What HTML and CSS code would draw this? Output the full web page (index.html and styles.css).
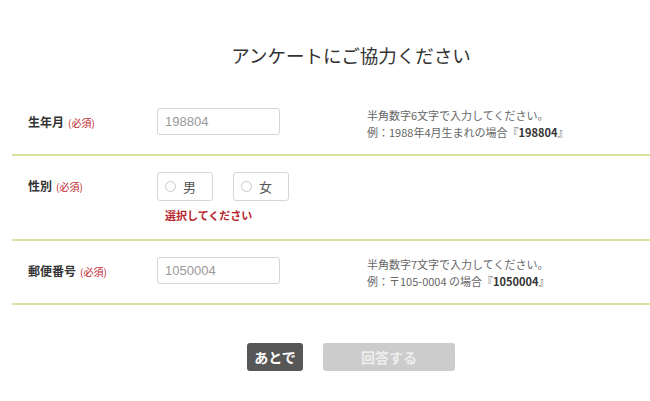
FILE: index.html
```html
<!DOCTYPE html>
<html lang="ja">
<head>
<meta charset="UTF-8">
<title>アンケート</title>
<link rel="stylesheet" href="styles.css">
</head>
<body>
<div class="survey">
<h1 class="survey-title">アンケートにご協力ください</h1>

<div class="row">
<div class="row-label">生年月<span class="required">(必須)</span></div>
<div class="row-field">
<input class="text-input" type="text" placeholder="198804">
</div>
<div class="row-hint">
<p>半角数字6文字で入力してください。</p>
<p>例：1988年4月生まれの場合『<b>198804</b>』</p>
</div>
</div>

<div class="row">
<div class="row-label">性別<span class="required">(必須)</span></div>
<div class="row-field">
<div class="radios">
<label class="radio"><span class="radio-dot"></span>男</label>
<label class="radio"><span class="radio-dot"></span>女</label>
</div>
<div class="error">選択してください</div>
</div>
</div>

<div class="row">
<div class="row-label">郵便番号<span class="required">(必須)</span></div>
<div class="row-field">
<input class="text-input" type="text" placeholder="1050004">
</div>
<div class="row-hint">
<p>半角数字7文字で入力してください。</p>
<p>例：〒105-0004 の場合『<b>1050004</b>』</p>
</div>
</div>

<div class="actions">
<button class="btn btn-later">あとで</button>
<button class="btn btn-submit" disabled>回答する</button>
</div>
</div>
</body>
</html>
```

FILE: styles.css
```css
body {
    margin: 0;
    padding: 0;
    background: #fff;
    color: #333;
    font-family: "Noto Sans CJK JP", "Noto Sans", sans-serif;
    overflow: hidden;
}
.survey {
    width: 678px;
    margin-left: 12px;
}
.survey-title {
    margin: 40px 0 22px;
    font-size: 18.5px;
    line-height: 30px;
    font-weight: normal;
    text-align: center;
    color: #333;
}
.row {
    display: flex;
    align-items: flex-start;
    padding: 16px 0 13px;
    border-bottom: 2px solid #d8e3a0;
}
.row-label {
    width: 129px;
    padding-left: 16px;
    font-size: 12px;
    line-height: 28px;
    font-weight: bold;
    color: #333;
}
.required {
    margin-left: 4px;
    font-size: 10px;
    font-weight: normal;
    color: #c0262d;
}
.row-field {
    width: 210px;
}
.text-input {
    display: block;
    box-sizing: border-box;
    width: 123px;
    height: 27px;
    padding: 0 7px;
    border: 1px solid #d6d6d6;
    border-radius: 3px;
    font-family: "Liberation Sans", Arial, sans-serif;
    font-size: 13px;
    color: #333;
}
.text-input::placeholder {
    color: #999;
}
.row-hint {
    margin-top: -1px;
    font-size: 11px;
    line-height: 17px;
    color: #666;
}
.row-hint p {
    margin: 0;
}
.row-hint b {
    color: #333;
}
.radios {
    display: flex;
    gap: 20px;
}
.radio {
    box-sizing: border-box;
    display: flex;
    align-items: center;
    width: 56px;
    height: 29px;
    padding-left: 7px;
    border: 1px solid #d6d6d6;
    border-radius: 3px;
    font-size: 13px;
    color: #555;
}
.radio-dot {
    box-sizing: border-box;
    width: 11px;
    height: 11px;
    margin-right: 7px;
    border: 1px solid #c8c8c8;
    border-radius: 50%;
}
.error {
    margin: 6px 0 0 8px;
    padding-bottom: 3px;
    font-size: 11px;
    line-height: 16px;
    font-weight: bold;
    color: #b8272e;
}
.actions {
    display: flex;
    justify-content: center;
    gap: 20px;
    margin-top: 38px;
}
.btn {
    height: 28px;
    border: none;
    border-radius: 3px;
    font-family: "Noto Sans CJK JP", sans-serif;
    font-size: 14px;
    font-weight: bold;
    color: #fff;
    padding: 0;
}
.btn-later {
    width: 56px;
    background: #575757;
}
.btn-submit {
    width: 132px;
    background: #cccccc;
    color: #eee;
}
```
